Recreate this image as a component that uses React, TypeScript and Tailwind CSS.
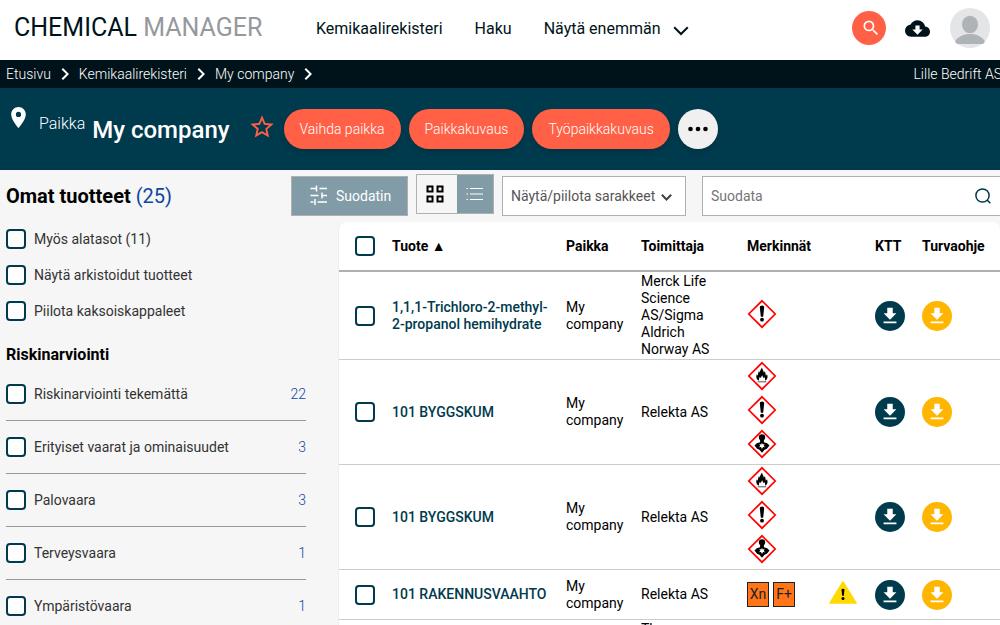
import { ReactNode, useState } from 'react';
import {
  MdChevronRight,
  MdCloudDownload,
  MdFileDownload,
  MdPlace,
  MdSearch,
  MdStarBorder,
} from 'react-icons/md';

type Pictogram = 'flame' | 'exclamation' | 'health';

type Product = {
  id: number;
  name: string;
  location: string;
  supplier: string;
  pictograms?: Pictogram[];
  labels?: string[];
  warning?: boolean;
};

const products: Product[] = [
  {
    id: 1,
    name: '1,1,1-Trichloro-2-methyl-2-propanol hemihydrate',
    location: 'My company',
    supplier: 'Merck Life Science AS/Sigma Aldrich Norway AS',
    pictograms: ['exclamation'],
  },
  {
    id: 2,
    name: '101 BYGGSKUM',
    location: 'My company',
    supplier: 'Relekta AS',
    pictograms: ['flame', 'exclamation', 'health'],
  },
  {
    id: 3,
    name: '101 BYGGSKUM',
    location: 'My company',
    supplier: 'Relekta AS',
    pictograms: ['flame', 'exclamation', 'health'],
  },
  {
    id: 4,
    name: '101 RAKENNUSVAAHTO',
    location: 'My company',
    supplier: 'Relekta AS',
    labels: ['Xn', 'F+'],
    warning: true,
  },
  {
    id: 5,
    name: 'Acetone',
    location: 'My company',
    supplier: 'Thermo Fisher Scientific Technologies Norway AS',
    pictograms: ['flame'],
  },
];

const toggles = ['Myös alatasot (11)', 'Näytä arkistoidut tuotteet', 'Piilota kaksoiskappaleet'];

const risks = [
  { label: 'Riskinarviointi tekemättä', count: 22 },
  { label: 'Erityiset vaarat ja ominaisuudet', count: 3 },
  { label: 'Palovaara', count: 3 },
  { label: 'Terveysvaara', count: 1 },
  { label: 'Ympäristövaara', count: 1 },
];

const actions = ['Vaihda paikka', 'Paikkakuvaus', 'Työpaikkakuvaus'];
const crumbs = ['Etusivu', 'Kemikaalirekisteri', 'My company'];

function Checkbox({ label }: { label?: string }) {
  return (
    <input
      type="checkbox"
      aria-label={label}
      className="block size-5 shrink-0 appearance-none rounded border-2 border-[#003a4d] bg-white checked:bg-[#003a4d]"
    />
  );
}

function ChevronDown({ className }: { className: string }) {
  return (
    <svg viewBox="0 0 16 10" className={className} fill="none" stroke="currentColor" aria-hidden="true">
      <path d="M1.2 1.2 8 8l6.800-6.800" />
    </svg>
  );
}

function Avatar() {
  return (
    <svg viewBox="0 0 40 40" className="size-10" aria-hidden="true">
      <circle cx="20" cy="20" r="20" fill="#e3e5e7" />
      <ellipse cx="20" cy="16.500" rx="8" ry="8.700" fill="#adb3b7" />
      <path d="M5 33.500C8 28.500 13.500 26 20 26s12 2.500 15 7.500L33 36H7z" fill="#adb3b7" />
    </svg>
  );
}

const pictogramArt: Record<Pictogram, ReactNode> = {
  exclamation: (
    <>
      <path d="M12.800 8q0-1.500 2.200-1.500t2.200 1.500l-1 9.700h-2.400z" />
      <circle cx="15" cy="20.700" r="1.900" />
    </>
  ),
  flame: (
    <>
      <path d="M12 19.800c-2.500-1.200-3.400-3.600-2.200-6.600l.9 1.500c.5-1.500.3-2.800 1.300-4.600l.8 1.700c.2-2 1-3.500 2.200-5.200.2 2 1.600 3 1.900 5.200l.9-1.500c.8 1.500.6 3 1.200 4.400l1-1.500c1.200 2.800.4 5.400-2 6.600.4-1.500 0-2.900-.7-3.800l-.7 1.200-1.500-3-1.400 3-.8-1.500c-.7 1.300-1.100 2.400-.9 4.100z" />
      <path d="M10.700 20.700h8.600" stroke="#888" strokeWidth="1.500" />
    </>
  ),
  health: (
    <>
      <path d="M15 5.200a3.200 3.200 0 0 1 3.200 3.200c0 1.300-.7 2-1.300 2.700v2.200l3.300 1 2.300 2.200-2.600 3.200-2.300 1-2.600 3-2.600-3-2.300-1-2.600-3.200 2.300-2.200 3.300-1v-2.200c-.6-.7-1.300-1.400-1.300-2.700A3.200 3.200 0 0 1 15 5.200z" />
      <path
        d="m15 13.800.7 1.700 2-.5-1 1.700 1.400 1.500-2.100-.2-1 2-1-2-2.100.2 1.400-1.500-1-1.700 2 .5z"
        fill="white"
      />
    </>
  ),
};

function HazardIcon({ kind }: { kind: Pictogram }) {
  return (
    <svg viewBox="0 0 30 30" className="mb-1 block size-[30px]" role="img" aria-label={kind}>
      <path d="M15 1.800 28.200 15 15 28.200 1.800 15z" fill="white" stroke="#f00" strokeWidth="1.700" />
      {pictogramArt[kind]}
    </svg>
  );
}

function WarningTriangle() {
  return (
    <svg viewBox="0 0 28 23" className="w-7" role="img" aria-label="Varoitus">
      <path d="M13.200.8q.8-1 1.600 0L27.600 21.500q.6 1.300-.8 1.300H1.200q-1.400 0-.8-1.300z" fill="#ffd900" />
      <path d="M12.500 8.200q1.500-.9 3 0l-.7 6.500h-1.600z" />
      <circle cx="14" cy="17.500" r="1.500" />
    </svg>
  );
}

function DownloadLink({ label, className }: { label: string; className: string }) {
  return (
    <a
      href="#"
      aria-label={label}
      className={`flex size-[30px] items-center justify-center rounded-full text-white ${className}`}
    >
      <MdFileDownload size={22} />
    </a>
  );
}

function Header() {
  return (
    <header className="flex h-15 items-center bg-white pr-[10px] pb-1 pl-[14px]">
      <a href="#" className="w-[302px] shrink-0 text-[25px] whitespace-nowrap text-[#00131a]">
        CHEMICAL <span className="text-[#96999c]">MANAGER</span>
      </a>
      <nav className="flex items-center gap-8 pt-[2px] text-base whitespace-nowrap text-[#00131a]">
        <a href="#">Kemikaalirekisteri</a>
        <a href="#">Haku</a>
        <button type="button" className="flex items-center gap-3">
          Näytä enemmän
          <ChevronDown className="mt-1 w-4 stroke-2" />
        </button>
      </nav>
      <div className="ml-auto flex items-center">
        <button
          type="button"
          aria-label="Haku"
          className="flex size-[34px] items-center justify-center rounded-full bg-[#ff6046] pl-1 text-white"
        >
          <MdSearch size={20} />
        </button>
        <button type="button" aria-label="Lataukset" className="mr-5 ml-[19px] text-[#00131a]">
          <MdCloudDownload size={25} />
        </button>
        <button type="button" aria-label="Profiili">
          <Avatar />
        </button>
      </div>
    </header>
  );
}

function Breadcrumb() {
  return (
    <div className="flex h-7 items-center justify-between overflow-hidden bg-[#00131a] pl-[6px] text-sm font-light whitespace-nowrap text-white">
      <nav aria-label="Murupolku" className="flex items-center gap-[2px]">
        {crumbs.map((crumb) => (
          <span key={crumb} className="flex items-center gap-[2px]">
            <a href="#">{crumb}</a>
            <MdChevronRight size={24} />
          </span>
        ))}
      </nav>
      <span className="-mr-[2px]">Lille Bedrift AS</span>
    </div>
  );
}

function Banner() {
  return (
    <div className="flex h-[82px] items-center bg-[#003a4d] pl-[6px] text-white">
      <MdPlace size={25} className="mb-6" />
      <h1 className="ml-2 flex items-center gap-[7px] pt-[2px] whitespace-nowrap">
        <span className="pb-3 text-base font-light">Paikka</span>
        <span className="text-2xl font-medium">My company</span>
      </h1>
      <button type="button" aria-label="Lisää suosikkeihin" className="mr-2 mb-1 ml-[18px] text-[#ff6046]">
        <MdStarBorder size={28} />
      </button>
      <div className="flex items-center gap-2">
        {actions.map((action) => (
          <button
            key={action}
            type="button"
            className="h-10 rounded-full bg-[#ff6046] px-4 text-sm font-light whitespace-nowrap shadow-md"
          >
            {action}
          </button>
        ))}
        <button
          type="button"
          aria-label="Lisää toimintoja"
          className="flex size-10 items-center justify-center rounded-full bg-[#f0f0f0] text-black shadow-md"
        >
          <svg viewBox="0 0 20 6" className="w-5" fill="currentColor" aria-hidden="true">
            <circle cx="2.500" cy="3" r="2.300" />
            <circle cx="10" cy="3" r="2.300" />
            <circle cx="17.500" cy="3" r="2.300" />
          </svg>
        </button>
      </div>
    </div>
  );
}

function Toolbar() {
  const [view, setView] = useState<'grid' | 'list'>('list');
  const active = 'bg-[#819ca6] text-white';
  const inactive = 'bg-[#f6f6f6] text-black';

  return (
    <div className="flex items-center pt-1 pl-[6px]">
      <h2 className="w-[285px] shrink-0 text-xl font-bold text-black">
        Omat tuotteet <span className="font-normal text-[#0d47a1]">(25)</span>
      </h2>
      <button
        type="button"
        className="flex h-10 w-[117px] shrink-0 items-center gap-2 border border-[#b0b0b0] bg-[#819ca6] pl-[18px] text-sm text-white"
      >
        <svg viewBox="0 0 18 22" className="w-[18px]" fill="none" stroke="currentColor" strokeWidth="1.500" aria-hidden="true">
          <path d="M.5 3.500h5.500M6.500 .5v6M9.500 3.500h7.500M.5 10.500h8M12 7.500v6M12 10.500h5M.5 17h3M5 14v6M7.500 17h9.500" />
        </svg>
        Suodatin
      </button>
      <div className="mb-1 ml-2 flex h-10 w-[78px] shrink-0 border border-[#b0b0b0]">
        <button
          type="button"
          aria-label="Ruudukko"
          onClick={() => setView('grid')}
          className={`flex w-10 items-center justify-center pr-1 ${view === 'grid' ? active : inactive}`}
        >
          <svg viewBox="0 0 18 18" className="w-[18px]" fill="none" stroke="currentColor" strokeWidth="2" aria-hidden="true">
            <path d="M1.500 1.500h5v5h-5zM11.500 1.500h5v5h-5zM1.500 11.500h5v5h-5zM11.500 11.500h5v5h-5z" />
          </svg>
        </button>
        <button
          type="button"
          aria-label="Luettelo"
          onClick={() => setView('list')}
          className={`flex flex-1 items-center justify-center ${view === 'list' ? active : inactive}`}
        >
          <svg viewBox="0 0 18 14" className="w-[18px]" fill="none" stroke="currentColor" strokeWidth="1.200" aria-hidden="true">
            <path d="M.5 1.500h1.500M4 1.500h13M.5 7h1.500M4 7h13M.5 12.500h1.500M4 12.500h13" />
          </svg>
        </button>
      </div>
      <div className="relative ml-2 w-[184px] shrink-0">
        <select
          aria-label="Näytä/piilota sarakkeet"
          className="h-10 w-full appearance-none border border-[#b0b0b0] bg-white px-2 text-sm text-[#555]"
        >
          <option>Näytä/piilota sarakkeet</option>
        </select>
        <ChevronDown className="pointer-events-none absolute top-[18px] right-[14px] w-[11px] stroke-3 text-[#444]" />
      </div>
      <label className="-mr-1 ml-4 flex h-10 min-w-0 flex-1 items-center border border-[#b0b0b0] bg-white pr-3 pl-2">
        <input
          type="text"
          placeholder="Suodata"
          aria-label="Suodata"
          className="min-w-0 flex-1 text-sm text-[#333] outline-none placeholder:text-[#757575]"
        />
        <svg viewBox="0 0 16 16" className="w-4" fill="none" stroke="#003a4d" strokeWidth="1.500" aria-hidden="true">
          <circle cx="7.500" cy="7.500" r="6.600" />
          <path d="m12 12 3.300 3.300" />
        </svg>
      </label>
    </div>
  );
}

function Sidebar() {
  return (
    <aside className="w-[300px] shrink-0 pt-[7px] text-sm text-[#333]">
      <div className="flex flex-col gap-4">
        {toggles.map((toggle) => (
          <label key={toggle} className="flex items-center gap-2">
            <Checkbox />
            {toggle}
          </label>
        ))}
      </div>
      <h3 className="mt-[22px] text-base font-bold text-black">Riskinarviointi</h3>
      <ul className="mt-px">
        {risks.map((risk) => (
          <li
            key={risk.label}
            className="flex h-[53px] items-center justify-between border-b border-[#999]"
          >
            <label className="flex items-center gap-2">
              <Checkbox />
              {risk.label}
            </label>
            <a href="#" className="font-light text-[#0d47a1]">
              {risk.count}
            </a>
          </li>
        ))}
      </ul>
    </aside>
  );
}

function ProductTable() {
  return (
    <div className="ml-8 min-w-0 flex-1 overflow-hidden rounded-t-lg border-l border-[#eee] bg-white">
      <table className="w-full table-fixed border-separate border-spacing-0 text-left text-sm leading-[17px] text-black">
        <thead>
          <tr className="h-[50px] [&>th]:border-b-2 [&>th]:border-[#b0b0b0] [&>th]:font-bold">
            <th className="w-[53px] pl-4">
              <Checkbox label="Valitse kaikki" />
            </th>
            <th className="w-[174px]">Tuote ▲</th>
            <th className="w-[75px]">Paikka</th>
            <th className="w-[106px]">Toimittaja</th>
            <th className="w-[128px]">Merkinnät</th>
            <th className="w-[47px]">KTT</th>
            <th>Turvaohje</th>
          </tr>
        </thead>
        <tbody>
          {products.map((product) => (
            <tr key={product.id} className="h-[50px] [&>td]:border-b [&>td]:border-[#ccc] [&>td]:py-px">
              <td className="pl-4">
                <Checkbox label={product.name} />
              </td>
              <td className="pr-4">
                <a href="#" className="font-medium text-[#003a4d]">
                  {product.name}
                </a>
              </td>
              <td className="pr-4">{product.location}</td>
              <td className="pr-4">{product.supplier}</td>
              <td>
                {product.pictograms?.map((kind) => <HazardIcon key={kind} kind={kind} />)}
                {product.labels && (
                  <div className="flex items-center gap-1 pr-[18px]">
                    {product.labels.map((label) => (
                      <span
                        key={label}
                        className="flex h-[25px] w-[22px] items-center justify-center border border-[#222] bg-[#ff7518] text-[#222]"
                      >
                        {label}
                      </span>
                    ))}
                    {product.warning && (
                      <span className="mb-1 ml-auto">
                        <WarningTriangle />
                      </span>
                    )}
                  </div>
                )}
              </td>
              <td>
                <DownloadLink label="KTT" className="bg-[#003a4d]" />
              </td>
              <td>
                <DownloadLink label="Turvaohje" className="bg-[#ffb600]" />
              </td>
            </tr>
          ))}
        </tbody>
      </table>
    </div>
  );
}

export default function App() {
  return (
    <div className="min-h-screen overflow-x-clip bg-[#f6f6f6] font-[Roboto,sans-serif]">
      <Header />
      <Breadcrumb />
      <Banner />
      <main>
        <Toolbar />
        <div className="mt-1 flex pl-[6px]">
          <Sidebar />
          <ProductTable />
        </div>
      </main>
    </div>
  );
}
